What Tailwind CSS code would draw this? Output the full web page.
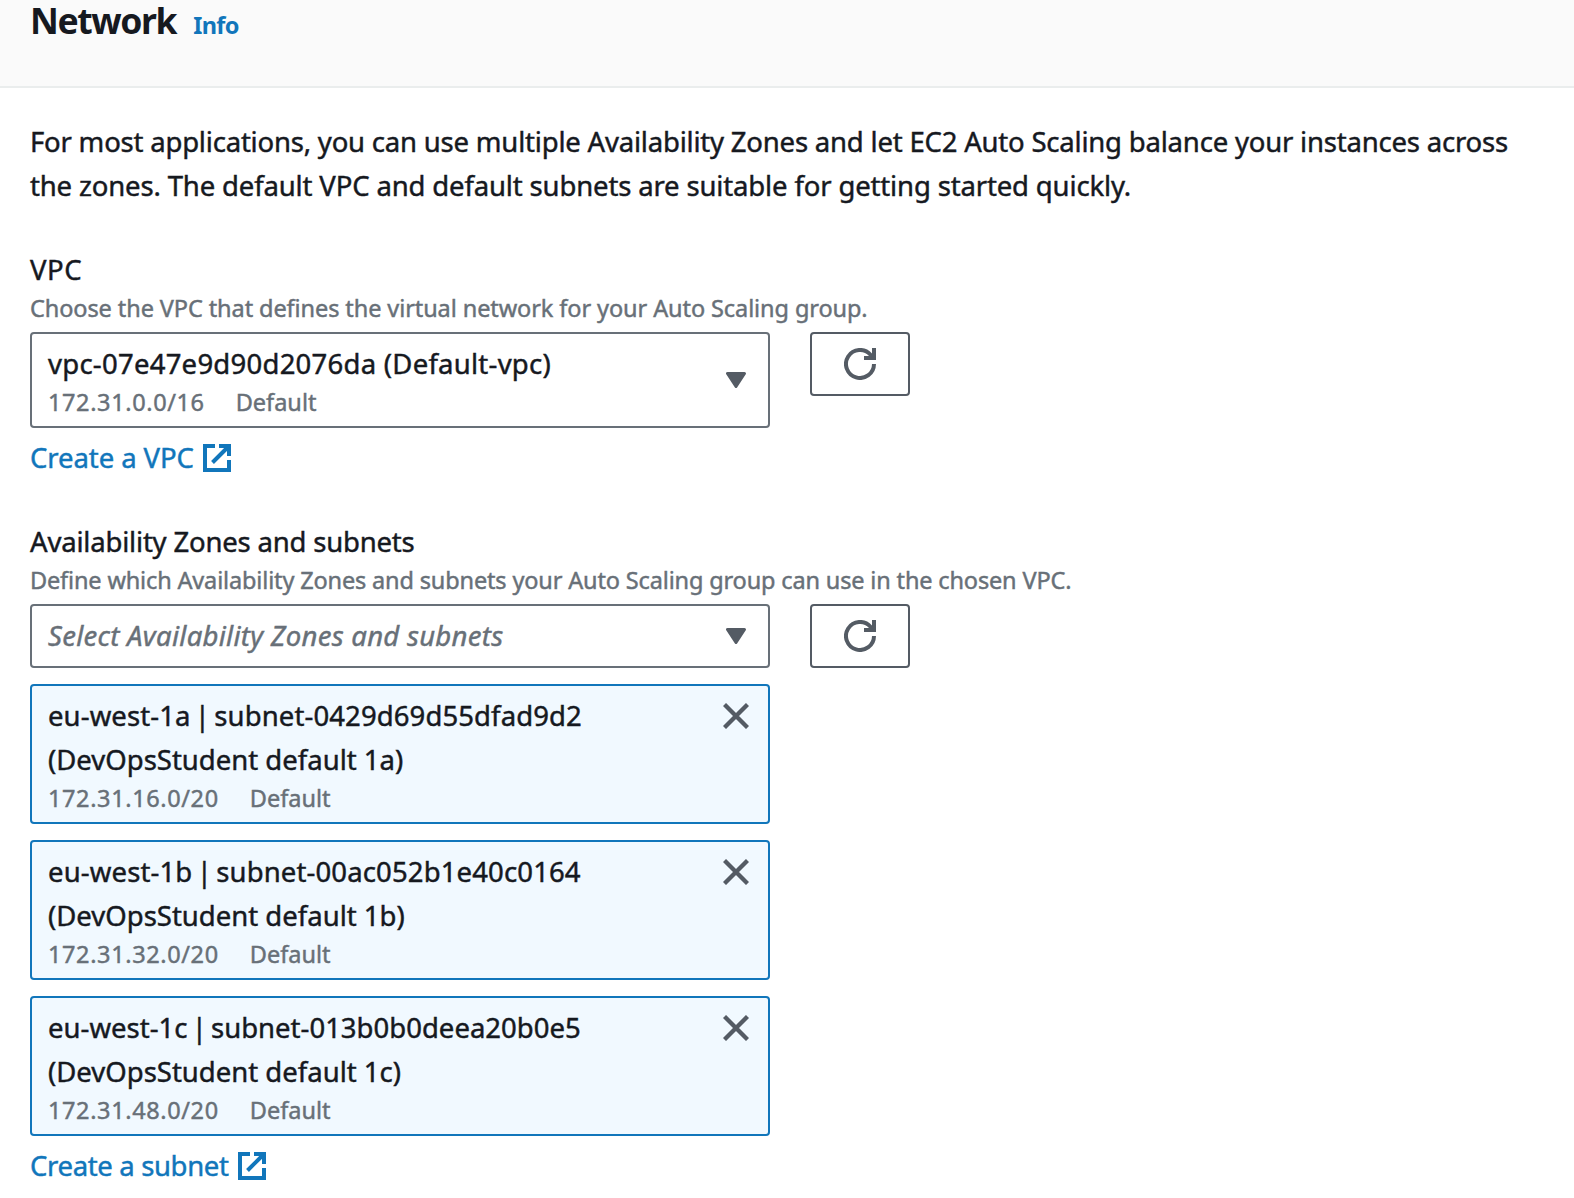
<!DOCTYPE html>
<html lang="en">
<head>
<meta charset="utf-8">
<title>Network</title>
<script src="https://cdn.jsdelivr.net/npm/@tailwindcss/browser@4"></script>
</head>
<body class="bg-white font-['Noto_Sans','Open_Sans',sans-serif] text-[27.5px] leading-[44px] text-[#16191f] whitespace-nowrap [-webkit-text-stroke:0.45px]">
<svg class="hidden">
  <symbol id="external" viewBox="0 0 28 28">
    <path d="M12 2H2v24h24V16M16 2h10v10M9.500 18.500 26 2" fill="none" stroke="currentColor" stroke-width="4"/>
  </symbol>
  <symbol id="refresh" viewBox="0 0 32 32">
    <path d="M30 16A14 14 0 1 1 26.500 6.700L29 10" fill="none" stroke="currentColor" stroke-width="4"/>
    <path d="M30 0v10H20" fill="none" stroke="currentColor" stroke-width="4"/>
  </symbol>
  <symbol id="caret" viewBox="0 0 20 16">
    <path d="M1.500 1.500h17L10 14.500z" fill="currentColor" stroke="currentColor" stroke-width="3" stroke-linejoin="round"/>
  </symbol>
  <symbol id="close" viewBox="0 0 26 26">
    <path d="M1.500 1.500l23 23M24.500 1.500l-23 23" fill="none" stroke="currentColor" stroke-width="4.300"/>
  </symbol>
</svg>

<header class="flex items-baseline gap-[17px] h-[88px] pl-[30px] bg-[#fafafa] border-b-2 border-[#eaeded] leading-[40px]">
  <h2 class="text-[35.5px] font-bold tracking-[-1.4px] [-webkit-text-stroke:0px]">Network</h2>
  <a class="text-[23.5px] font-bold tracking-[-0.6px] text-[#1176bb] [-webkit-text-stroke:0px]">Info</a>
</header>

<main class="px-[30px] pt-8">
  <p><span class="tracking-[-0.2px]">For most applications, you can use multiple Availability Zones and let EC2 Auto Scaling balance your instances across</span><br><span class="tracking-[-0.15px]">the zones. The default VPC and default subnets are suitable for getting started quickly.</span></p>

  <section class="mt-10">
    <div class="tracking-[0.5px]">VPC</div>
    <div class="pb-2 text-[23.5px] leading-8 tracking-[-0.09px] text-[#687078]">Choose the VPC that defines the virtual network for your Auto Scaling group.</div>
    <div class="flex items-start gap-10">
      <div class="flex items-center justify-between w-[740px] h-24 pl-4 pr-[22px] border-2 border-[#687078] rounded-[4px]">
        <div>
          <div class="tracking-[0.25px]">vpc-07e47e9d90d2076da (Default-vpc)</div>
          <div class="flex gap-[31px] text-[23.5px] leading-8 text-[#687078]"><span class="tracking-[0.62px]">172.31.0.0/16</span><span>Default</span></div>
        </div>
        <svg class="w-5 h-4 text-[#545b64]"><use href="#caret"/></svg>
      </div>
      <button class="flex justify-center w-[100px] h-16 pt-[14px] border-2 border-[#545b64] rounded-[4px] text-[#545b64]"><svg class="size-8"><use href="#refresh"/></svg></button>
    </div>
    <a class="flex items-center gap-[9px] mt-2 text-[#1176bb]"><span class="tracking-[-0.08px]">Create a VPC</span><svg class="size-7"><use href="#external"/></svg></a>
  </section>

  <section class="mt-10">
    <div class="tracking-[-0.19px]">Availability Zones and subnets</div>
    <div class="pb-2 text-[23.5px] leading-8 tracking-[-0.15px] text-[#687078]">Define which Availability Zones and subnets your Auto Scaling group can use in the chosen VPC.</div>
    <div class="flex items-start gap-10">
      <div class="flex items-center justify-between w-[740px] h-16 pl-4 pr-[22px] border-2 border-[#687078] rounded-[4px]">
        <span class="italic text-[#687078] tracking-[0.28px]">Select Availability Zones and subnets</span>
        <svg class="w-5 h-4 text-[#545b64]"><use href="#caret"/></svg>
      </div>
      <button class="flex justify-center w-[100px] h-16 pt-[14px] border-2 border-[#545b64] rounded-[4px] text-[#545b64]"><svg class="size-8"><use href="#refresh"/></svg></button>
    </div>

    <div class="flex flex-col gap-4 mt-4">
      <div class="flex items-start justify-between w-[740px] h-[140px] pt-2 pl-4 pr-[19px] bg-[#f1f9ff] border-2 border-[#1176bb] rounded-[4px]">
        <div>
          <div><span class="[word-spacing:-3px] tracking-[0.1px]">eu-west-1a | subnet-0429d69d55dfad9d2</span></div>
          <div>(DevOpsStudent default 1a)</div>
          <div class="flex gap-[31px] text-[23.5px] leading-8 text-[#687078]"><span class="tracking-[0.62px]">172.31.16.0/20</span><span>Default</span></div>
        </div>
        <svg class="size-[26px] mt-[9px] text-[#545b64]"><use href="#close"/></svg>
      </div>
      <div class="flex items-start justify-between w-[740px] h-[140px] pt-2 pl-4 pr-[19px] bg-[#f1f9ff] border-2 border-[#1176bb] rounded-[4px]">
        <div>
          <div><span class="[word-spacing:-3px] tracking-[0.13px]">eu-west-1b | subnet-00ac052b1e40c0164</span></div>
          <div>(DevOpsStudent default 1b)</div>
          <div class="flex gap-[31px] text-[23.5px] leading-8 text-[#687078]"><span class="tracking-[0.62px]">172.31.32.0/20</span><span>Default</span></div>
        </div>
        <svg class="size-[26px] mt-[9px] text-[#545b64]"><use href="#close"/></svg>
      </div>
      <div class="flex items-start justify-between w-[740px] h-[140px] pt-2 pl-4 pr-[19px] bg-[#f1f9ff] border-2 border-[#1176bb] rounded-[4px]">
        <div>
          <div><span class="[word-spacing:-3px] tracking-[0.01px]">eu-west-1c | subnet-013b0b0deea20b0e5</span></div>
          <div>(DevOpsStudent default 1c)</div>
          <div class="flex gap-[31px] text-[23.5px] leading-8 text-[#687078]"><span class="tracking-[0.62px]">172.31.48.0/20</span><span>Default</span></div>
        </div>
        <svg class="size-[26px] mt-[9px] text-[#545b64]"><use href="#close"/></svg>
      </div>
    </div>
    <a class="flex items-center gap-[9px] mt-2 text-[#1176bb]"><span class="tracking-[-0.35px]">Create a subnet</span><svg class="size-7"><use href="#external"/></svg></a>
  </section>
</main>
</body>
</html>
